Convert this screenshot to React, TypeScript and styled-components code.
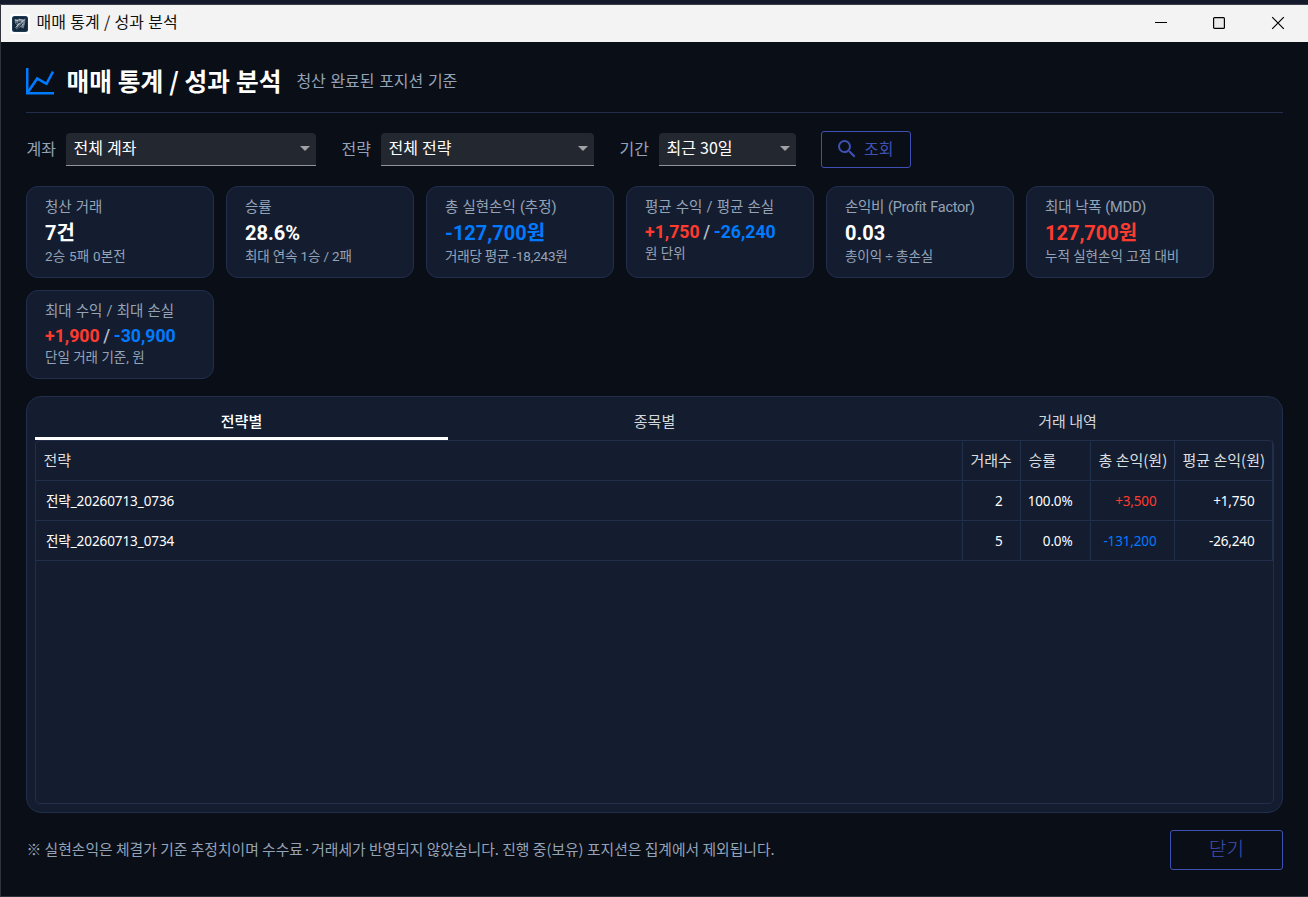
import React from "react";
import styled, { createGlobalStyle } from "styled-components";

const Global = createGlobalStyle`
  * { box-sizing: border-box; }
  html, body { margin: 0; background: #0a0e17; }
  body { font-family: "Noto Sans", "Noto Sans CJK KR", sans-serif; overflow: hidden; }
`;

const line = "#212e4c";
const UP = "#ff3b30";
const DOWN = "#007aff";
const ui = `"Noto Sans CJK KR", sans-serif`;
const mixed = `Roboto, "Noto Sans CJK KR", sans-serif`;

const Window = styled.div`
  width: 1308px;
  height: 897px;
  display: flex;
  flex-direction: column;
  background: #0a0e17;
  border-left: 1px solid #30333c;
  border-bottom: 1px solid #30333c;
`;
const Backdrop = styled.div`
  height: 5px;
  margin-left: -1px;
  flex: none;
  background: #141a2c;
  border-bottom: 1px solid #3a3e49;
`;
const TitleBar = styled.header`
  height: 37px;
  flex: none;
  display: flex;
  align-items: center;
  padding: 0 22px 0 9px;
  background: #f3f3f3;
`;
const WindowButtons = styled.div`
  margin-left: auto;
  margin-top: -1px;
  display: flex;
  svg { display: block; }
  svg + svg { margin-left: 42px; }
  svg:last-child { margin-left: 43px; }
`;
const Text = styled.span<{ $size: number; $ls?: number; $ws?: number; $color?: string; $weight?: number; $font?: string; $lh?: number; $top?: number; $left?: number }>`
  display: block;
  white-space: pre;
  font-family: ${(p) => p.$font ?? ui};
  font-size: ${(p) => p.$size}px;
  font-weight: ${(p) => p.$weight ?? 400};
  line-height: ${(p) => p.$lh ?? 20}px;
  letter-spacing: ${(p) => p.$ls ?? 0}px;
  word-spacing: ${(p) => p.$ws ?? 0}px;
  color: ${(p) => p.$color ?? "#94a3b8"};
  margin-top: ${(p) => p.$top ?? 0}px;
  margin-left: ${(p) => p.$left ?? 0}px;
`;
const Body = styled.main`
  flex: 1;
  min-height: 0;
  display: flex;
  flex-direction: column;
  padding: 0 25px 26px;
`;
const Heading = styled.div`
  height: 71px;
  flex: none;
  display: flex;
  align-items: center;
  padding-top: 7px;
  border-bottom: 1px solid ${line};
  svg { flex: none; margin-right: 12.5px; }
`;
const Filters = styled.div`
  display: flex;
  align-items: center;
  height: 38px;
  margin-top: 17px;
  flex: none;
`;
const FilterLabel = styled.div`
  width: 40px;
  flex: none;
`;
const Select = styled.div<{ $w: number }>`
  width: ${(p) => p.$w}px;
  height: 33px;
  flex: none;
  margin-right: 25px;
  padding: 0 6px 0 7.5px;
  display: flex;
  align-items: center;
  justify-content: space-between;
  background: #23272f;
  border-radius: 4px 4px 0 0;
  border-bottom: 1px solid #929398;
`;
const SearchButton = styled.button`
  width: 90px;
  height: 37px;
  padding: 0 0 0 13px;
  display: flex;
  align-items: center;
  gap: 5px;
  background: transparent;
  border: 1px solid #3f51b5;
  border-radius: 3px;
`;
const Cards = styled.section`
  display: grid;
  grid-template-columns: repeat(6, 188px);
  gap: 12px;
  margin-top: 18px;
  flex: none;
`;
const Card = styled.article<{ $h: number }>`
  height: ${(p) => p.$h}px;
  padding: 11px 0 0 18px;
  background: #141d2f;
  border: 1px solid ${line};
  border-radius: 12px;
`;
const Pair = styled.div`
  display: flex;
`;
const Panel = styled.section`
  flex: 1;
  min-height: 0;
  margin-top: 17px;
  padding: 8px;
  display: flex;
  flex-direction: column;
  background: #141d2f;
  border: 1px solid ${line};
  border-radius: 15px;
`;
const Tabs = styled.div`
  display: grid;
  grid-template-columns: repeat(3, 413px);
  height: 35px;
  flex: none;
`;
const Tab = styled.div<{ $on?: boolean }>`
  display: flex;
  align-items: center;
  justify-content: center;
  border-bottom: 3px solid ${(p) => (p.$on ? "#fff" : "transparent")};
`;
const Table = styled.div`
  flex: 1;
  border: 1px solid ${line};
  border-radius: 5px;
`;
const Row = styled.div`
  display: grid;
  grid-template-columns: 927px 58px 70px 84px 98px;
  height: 40px;
`;
const Cell = styled.div<{ $right?: boolean; $pad?: number }>`
  display: flex;
  align-items: center;
  justify-content: ${(p) => (p.$right ? "flex-end" : "flex-start")};
  padding: 0 ${(p) => (p.$right ? 17.5 : 0)}px 0 ${(p) => (p.$right ? 0 : p.$pad ?? 7.5)}px;
  border-right: 1px solid ${line};
  border-bottom: 1px solid ${line};
`;
const Footer = styled.footer`
  display: flex;
  justify-content: space-between;
  align-items: center;
  height: 40px;
  margin-top: 17px;
  flex: none;
`;
const CloseButton = styled.button`
  width: 113px;
  height: 40px;
  padding: 0;
  background: transparent;
  border: 1px solid #3f51b5;
  border-radius: 3px;
  display: flex;
  align-items: center;
  justify-content: center;
`;

const Caret = () => (
  <svg width="10" height="5" viewBox="0 0 10 5"><path d="M0 0h10L5 5z" fill="#a0a2a6" /></svg>
);

const AppIconSvg = styled.svg`
  margin-right: 7px;
`;
const AppIcon = () => (
  <AppIconSvg width="20" height="20" viewBox="0 0 20 20">
    <rect width="20" height="20" fill="#fdfdfd" />
    <rect x="2" y="2" width="16" height="16" rx="2.5" fill="#1b3a55" />
    <rect x="3" y="3" width="14" height="14" rx="2" fill="#14273b" />
    <path d="M4.5 5l2.5.6 2-1 3 1 3.5-1-.5 5-1.5 5-3-1.5-4.5 2.5 1-4-2-2.5z" fill="#6d7f8e" />
    <path d="M5 6l3 .6M9 5.6l4 .6M5.5 13.5l4-4 5-3.5M12 11l1.5-1" stroke="#c3ccd3" strokeWidth="0.9" fill="none" />
    <path d="M8 8.5l3-.5M7.5 14l5-4.5M6 9l1.5.5" stroke="#14273b" strokeWidth="1" fill="none" />
  </AppIconSvg>
);

type CardData = { label: string; ls?: number; value?: string; color?: string; pair?: [string, string]; note: string; noteLs?: number; h?: number };
const cards: CardData[] = [
  { label: "청산 거래", value: "7건", note: "2승 5패 0본전", noteLs: 0.2 },
  { label: "승률", value: "28.6%", note: "최대 연속 1승 / 2패", noteLs: -0.15 },
  { label: "총 실현손익 (추정)", value: "-127,700원", color: DOWN, note: "거래당 평균 -18,243원", noteLs: -0.2 },
  { label: "평균 수익 / 평균 손실", pair: ["+1,750", "-26,240"], note: "원 단위" },
  { label: "손익비 (Profit Factor)", ls: -0.28, value: "0.03", note: "총이익 ÷ 총손실", noteLs: -0.1 },
  { label: "최대 낙폭 (MDD)", ls: -0.2, value: "127,700원", color: UP, note: "누적 실현손익 고점 대비" },
  { label: "최대 수익 / 최대 손실", pair: ["+1,900", "-30,900"], note: "단일 거래 기준, 원", h: 89 },
];

const rows = [
  ["전략_20260713_0736", "2", "100.0%", "+3,500", "+1,750"],
  ["전략_20260713_0734", "5", "0.0%", "-131,200", "-26,240"],
];

const filters: [string, string, number][] = [
  ["계좌", "전체 계좌", 250],
  ["전략", "전체 전략", 213],
  ["기간", "최근 30일", 137],
];

export default function App() {
  return (
    <Window>
      <Global />
      <Backdrop />
      <TitleBar>
        <AppIcon />
        <Text $size={16} $ws={0.7} $color="#111" $top={-6} $left={-0.5}>매매 통계 / 성과 분석</Text>
        <WindowButtons>
          <svg width="16" height="16" viewBox="0 0 16 16"><path d="M2 7.5h12" stroke="#000" /></svg>
          <svg width="16" height="16" viewBox="0 0 16 16"><rect x="2.6" y="2.6" width="10.8" height="10.8" rx="1" fill="#ebebeb" stroke="#000" strokeWidth="1.2" /></svg>
          <svg width="16" height="16" viewBox="0 0 16 16"><path d="M2.2 2.2l11.6 11.6M13.8 2.2L2.2 13.8" stroke="#000" strokeWidth="1.2" /></svg>
        </WindowButtons>
      </TitleBar>
      <Body>
        <Heading>
          <svg width="28" height="28" viewBox="0 0 28 28">
            <path d="M1.25 1v25.25h26.75" fill="none" stroke={DOWN} strokeWidth="2.5" />
            <path d="M2 25L11.2 11.5l9.3 5.3L27 4.5" fill="none" stroke={DOWN} strokeWidth="2.6" />
          </svg>
          <Text $size={24.7} $weight={700} $color="#fff" $lh={32} $top={-2} $ws={0.3}>매매 통계 / 성과 분석</Text>
          <Text $size={16} $ws={1} $top={-2} $left={15}>청산 완료된 포지션 기준</Text>
        </Heading>
        <Filters>
          {filters.map(([l, v, w]) => (
            <React.Fragment key={l}>
              <FilterLabel><Text $size={16} $top={-3} $left={0.5}>{l}</Text></FilterLabel>
              <Select $w={w}><Text $size={16} $ws={0.5} $top={-4} $color="#fff">{v}</Text><Caret /></Select>
            </React.Fragment>
          ))}
          <SearchButton>
            <svg width="24" height="24" viewBox="0 0 24 24">
              <path fill="#3f51b5" d="M15.5 14h-.79l-.28-.27A6.471 6.471 0 0 0 16 9.5 6.5 6.5 0 1 0 9.5 16c1.61 0 3.09-.59 4.23-1.57l.27.28v.79l5 4.99L20.49 19l-4.99-5zm-6 0C7.01 14 5 11.99 5 9.5S7.01 5 9.5 5 14 7.01 14 9.5 11.99 14 9.5 14z" />
            </svg>
            <Text $size={16} $top={-3} $color="#3f51b5">조회</Text>
          </SearchButton>
        </Filters>
        <Cards>
          {cards.map((c) => (
            <Card key={c.label} $h={c.h ?? 92}>
              <Text $size={14.5} $font={mixed} $ls={c.ls} $ws={0.5}>{c.label}</Text>
              {c.pair ? (
                <Pair>
                  <Text $size={17.7} $weight={700} $font={mixed} $lh={28} $color={UP}>{c.pair[0]}</Text>
                  <Text $size={17.7} $weight={500} $font={mixed} $ws={-0.8} $lh={28} $color="#b4bccb">{" / "}</Text>
                  <Text $size={17.7} $weight={700} $font={mixed} $lh={28} $color={DOWN}>{c.pair[1]}</Text>
                </Pair>
              ) : (
                <Text $size={20} $weight={700} $font={mixed} $lh={31} $color={c.color ?? "#fff"}>{c.value}</Text>
              )}
              <Text $size={13.5} $font={mixed} $lh={16} $ls={c.noteLs} $top={-1}>{c.note}</Text>
            </Card>
          ))}
        </Cards>
        <Panel>
          <Tabs>
            <Tab $on><Text $size={15} $color="#fff" $weight={500}>전략별</Text></Tab>
            <Tab><Text $size={15} $color="#d3d6db">종목별</Text></Tab>
            <Tab><Text $size={15} $color="#d3d6db">거래 내역</Text></Tab>
          </Tabs>
          <Table>
            <Row>
              {["전략", "거래수", "승률", "총 손익(원)", "평균 손익(원)"].map((h) => (
                <Cell key={h}><Text $size={15} $top={-2} $color="#dcdddf">{h}</Text></Cell>
              ))}
            </Row>
            {rows.map((r) => (
              <Row key={r[0]}>
                {r.map((v, i) => (
                  <Cell key={i} $right={i > 0} $pad={10}>
                    <Text $size={13.5} $ls={i > 0 ? -0.15 : -0.08} $font={`"Noto Sans", "Noto Sans CJK KR", sans-serif`} $color={i === 3 ? (v[0] === "+" ? UP : DOWN) : "#fff"}>{v}</Text>
                  </Cell>
                ))}
              </Row>
            ))}
          </Table>
        </Panel>
        <Footer>
          <Text $size={14.8} $top={-2} $left={0.5}>※ 실현손익은 체결가 기준 추정치이며 수수료·거래세가 반영되지 않았습니다. 진행 중(보유) 포지션은 집계에서 제외됩니다.</Text>
          <CloseButton><Text $size={19} $top={-5} $weight={300} $color="#3f51b5">닫기</Text></CloseButton>
        </Footer>
      </Body>
    </Window>
  );
}
